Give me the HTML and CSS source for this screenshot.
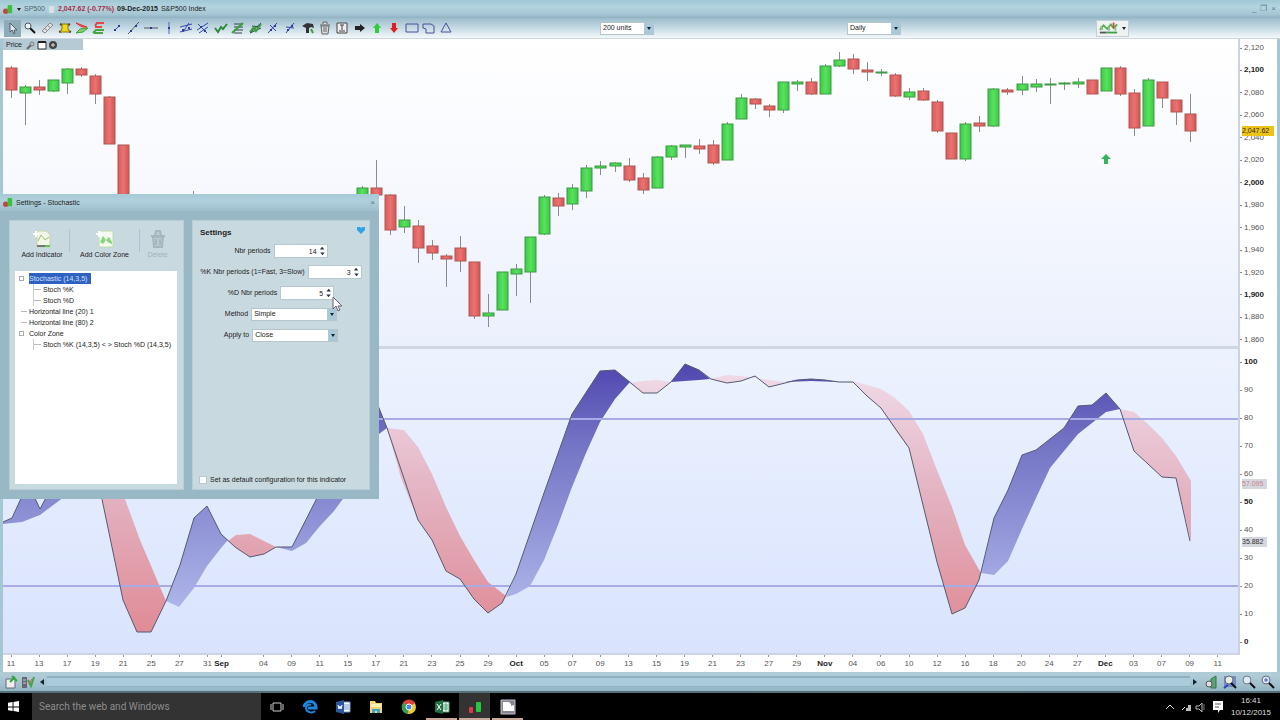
FILE: index.html
```html
<!DOCTYPE html>
<html lang="en">
<head>
  <meta charset="UTF-8" />
  <meta name="viewport" content="width=device-width, initial-scale=1.0" />
  <title>SP500 - Daily</title>
  <link rel="stylesheet" href="styles.css">
</head>
<body>
  <div class="app">
    <header class="titlebar">
      <svg class="logo" viewBox="0 0 12 12"><circle cx="3" cy="8" r="3" fill="#c8453c"/><rect x="5" y="1" width="5" height="9" rx="1" fill="#35c43c"/></svg>
      <span class="caret"></span>
      <span class="muted">SP500</span>
      <i class="flag"></i>
      <b class="quote">2,047.62 (-0.77%)</b>
      <b>09-Dec-2015</b>
      <span>S&amp;P500 Index</span>
      <div class="win-buttons">
        <button aria-label="Minimize">_</button>
        <button aria-label="Restore">❐</button>
        <button aria-label="Close">×</button>
      </div>
    </header>

    <div class="toolbar">
      <div class="tools">
        <button class="pressed" aria-label="Select"><svg viewBox="0 0 14 14"><path d="M4 2v9l2-2 2 4 1-1-1-3h3z" fill="#dfe8ec" stroke="#50616b"/></svg></button>
        <button aria-label="Zoom"><svg viewBox="0 0 14 14"><path d="M7 7l5 5" stroke="#111" stroke-width="2"/><circle cx="5" cy="5" r="3" fill="#e8f4fa" stroke="#555"/></svg></button>
        <button aria-label="Ruler"><svg viewBox="0 0 14 14"><path d="M2 10l8-8 3 2-8 8z" fill="#e4e4e0" stroke="#888"/><path d="M5 8l2 1M8 5l2 1" stroke="#888"/></svg></button>
        <button aria-label="Alert"><svg viewBox="0 0 14 14"><path d="M2 3l2 1M12 3l-2 1M1 11l3-1M13 11l-3-1" stroke="#444" stroke-width="2"/><path d="M4 3h6v5l2 3H2l2-3z" fill="#f0d820" stroke="#82730c"/></svg></button>
        <button aria-label="Buy order"><svg viewBox="0 0 14 14"><path d="M1 2l11 4H7z" fill="#e66" stroke="#d33"/><path d="M1 12l4-4 8-1-5 4z" fill="#8ccf72" stroke="#3b9e38"/></svg></button>
        <button aria-label="Sell order"><svg viewBox="0 0 14 14"><path d="M3 5l2-3h7M3 6h7" stroke="#e04848" fill="none" stroke-width="2"/><path d="M1 12l3-3h8M2 12h9" stroke="#4aa545" fill="none" stroke-width="2"/></svg></button>
        <button aria-label="Segment"><svg viewBox="0 0 14 14"><path d="M5 9l4-4" stroke="#3a49a8"/><path d="M4 8h2v2H4zM8 4h2v2H8z" fill="#2c3c9c"/></svg></button>
        <button aria-label="Line"><svg viewBox="0 0 14 14"><path d="M1 13L12 1" stroke="#555"/><path d="M3 9h2v2H3zM8 4h2v2H8z" fill="#2c3c9c"/></svg></button>
        <button aria-label="Horizontal line"><svg viewBox="0 0 14 14"><path d="M0 7h14" stroke="#555"/><path d="M6 6h2v2H6z" fill="#2c3c9c"/></svg></button>
        <button aria-label="Vertical line"><svg viewBox="0 0 14 14"><path d="M7 1v12" stroke="#4c62b5"/><path d="M6 6h2v2H6z" fill="#2c3c9c"/></svg></button>
        <button aria-label="Channel"><svg viewBox="0 0 14 14"><path d="M1 6l12-3M1 11l12-3M4 11l6-9" stroke="#3546b0" fill="none"/><path d="M3 8h2v2H3zM9 6h2v2H9z" fill="#2c3c9c"/></svg></button>
        <button aria-label="Pitchfork"><svg viewBox="0 0 14 14"><path d="M1 9l11-7M3 12l9-6M2 3l9 9" stroke="#3546b0" fill="none"/><path d="M4 5h2v2H4zM8 9h2v2H8z" fill="#2c3c9c"/></svg></button>
        <button aria-label="Trend"><svg viewBox="0 0 14 14"><path d="M1 7l3 4 3-5 2 2 4-5" stroke="#2e8a36" stroke-width="2" fill="none"/></svg></button>
        <button aria-label="Retracement"><svg viewBox="0 0 14 14"><path d="M3 3h9M3 6h9M3 9h9M3 12h8" stroke="#345"/><path d="M1 12L12 2" stroke="#3b9e38" stroke-width="2"/></svg></button>
        <button aria-label="Fan"><svg viewBox="0 0 14 14"><path d="M1 12L12 2M1 12l11-5M3 5l7 1" stroke="#345"/><path d="M1 11l4-5 2 4 5-7" stroke="#3b9e38" stroke-width="2" fill="none"/></svg></button>
        <button aria-label="Cycle"><svg viewBox="0 0 14 14"><path d="M2 12l9-10M4 4l6 6" stroke="#3546b0"/><path d="M4 8h2v2H4zM8 4h2v2H8z" fill="#2c3c9c"/></svg></button>
        <button aria-label="Cycle points"><svg viewBox="0 0 14 14"><path d="M3 12l8-10M3 6l8 1" stroke="#3546b0"/><path d="M4 8h2v2H4zM8 4h2v2H8z" fill="#2c3c9c"/></svg></button>
        <button aria-label="Edit"><svg viewBox="0 0 14 14"><path d="M1 5l5-3 6 1 1 4-3-1-2 1v5H5V7z" fill="#333"/><path d="M10 8l2 4" stroke="#3b9e38" stroke-width="2"/></svg></button>
        <button aria-label="Delete"><svg viewBox="0 0 14 14"><path d="M3 5h8l-1 8H4zM2 4h10M5 3V1h4v2M6 6v5M8 6v5" stroke="#666" fill="#ddd"/></svg></button>
        <button aria-label="Text"><svg viewBox="0 0 14 14"><path d="M2 2h10v10H2zM5 4h4M7 4v5M4 10h6" stroke="#444" fill="#eee"/></svg></button>
        <button aria-label="Arrow"><svg viewBox="0 0 14 14"><path d="M2 5h5V3l5 4-5 4V9H2z" fill="#222"/></svg></button>
        <button aria-label="Arrow up"><svg viewBox="0 0 14 14"><path d="M5 12V7H3l4-5 4 5H9v5z" fill="#30cc3c"/></svg></button>
        <button aria-label="Arrow down"><svg viewBox="0 0 14 14"><path d="M5 2v5H3l4 5 4-5H9V2z" fill="#e02020"/></svg></button>
        <button aria-label="Rectangle"><svg viewBox="0 0 14 14"><path d="M1 3h12v8H1z" stroke="#4c4f98" fill="none"/></svg></button>
        <button aria-label="Polygon"><svg viewBox="0 0 14 14"><path d="M1 3h8l3 2v7H4V8L1 7z" stroke="#4c4f98" fill="none"/></svg></button>
        <button aria-label="Triangle"><svg viewBox="0 0 14 14"><path d="M7 2l5 9H2z" stroke="#4c4f98" fill="none"/></svg></button>
      </div>
      <span class="drop"><select aria-label="Units"><option>200 units</option></select></span>
      <span class="drop"><select aria-label="Timeframe"><option>Daily</option></select></span>
      <button class="indicator-btn" aria-label="Indicators">
        <svg viewBox="0 0 22 14"><path d="M1 9l4-5 4 4 4-5 3 4 4-4" stroke="#55b04c" fill="none" stroke-width="2"/><path d="M2 5l2 4M11 5v5M18 6v4" stroke="#8cc47c" stroke-width="2"/><path d="M16 1v6" stroke="#e04848" stroke-width="2"/><path d="M1 12h7" stroke="#555" stroke-width="2"/><path d="M8 12h12" stroke="#3e9d48" stroke-width="2"/></svg>
        <span class="caret"></span>
      </button>
    </div>

    <main class="chart">
      <div class="pane price-pane">
        <svg id="price" viewBox="3 39 1235 307" preserveAspectRatio="none">
          <defs>
            <linearGradient id="up"><stop offset="0" stop-color="#3cc848"/><stop offset=".5" stop-color="#58e25c"/><stop offset="1" stop-color="#3cc848"/></linearGradient>
            <linearGradient id="down"><stop offset="0" stop-color="#d95c5c"/><stop offset=".5" stop-color="#ec7272"/><stop offset="1" stop-color="#cf5656"/></linearGradient>
          </defs>
          <g id="candles"></g>
          <path d="M1104 164v-5h-3l5-5 5 5h-3v5z" fill="#35b45c"/>
        </svg>
        <div class="pane-tab">
          Price
          <svg viewBox="0 0 36 10"><path d="M2 9l4-4" stroke="#666" stroke-width="2"/><circle cx="7" cy="4" r="2" fill="none" stroke="#777"/><path d="M13 2h8v7h-8z" fill="#fff" stroke="#333"/><path d="M13 2h8" stroke="#222" stroke-width="2"/><circle cx="28" cy="5" r="4" fill="#444"/><path d="M26 5h4M28 3v4" stroke="#ddd"/></svg>
        </div>
      </div>
      <ol class="axis price-axis" id="price-axis">
        <li class="tag last">2,047.62</li>
      </ol>

      <div class="splitter"></div>

      <div class="pane stoch-pane">
        <svg viewBox="3 349 1235 304" preserveAspectRatio="none">
          <defs>
            <linearGradient id="bull" gradientUnits="userSpaceOnUse" x1="0" y1="365" x2="0" y2="615"><stop offset="0" stop-color="#4f48b0"/><stop offset=".3" stop-color="#7272c4"/><stop offset="1" stop-color="#b0b8ea"/></linearGradient>
            <linearGradient id="bear" gradientUnits="userSpaceOnUse" x1="0" y1="375" x2="0" y2="630"><stop offset="0" stop-color="#efd9e6"/><stop offset=".5" stop-color="#e3b0bf"/><stop offset="1" stop-color="#e08c96"/></linearGradient>
          </defs>
          <g fill="url(#bull)">
            <path d="M3 522l9-4 11-24h10l7 15 8-15h20L56 503 40 515 22 522 3 524z"/>
            <path d="M166 601l14-36 14-47 13-12 14 28 7 6-7 8-14 18-13 22-15 19z"/>
            <path d="M276 547h16l28-55h28l-14 19-14 15-14 17-14 8z"/>
            <path d="M370 380l9 28 8 20-8 6-9 4z"/>
            <path d="M506 597l10-23 28-81 28-79 28-43 15-1 15 12-15 17-15 23-14 31-14 34-14 38-14 35-14 26-14 8z"/>
            <path d="M671 382l14-18 14 6 11 9-11 1z"/>
            <path d="M785 382l12-2 14-1 14 1 14 2-28-1z"/>
            <path d="M981 573l13-55 14-28 14-35 14-5 28-22 14-22 14-1 14-12 14 16-14 3-14 11-14 11-14 17-14 17-14 30-14 31-14 32-14 14z"/>
          </g>
          <g fill="url(#bear)">
            <path d="M98 480l25 120 14 32h14l15-31-26-61-22-60z"/>
            <path d="M228 541l8-6 14-1 12 6 14 7-12 7-14 3-15-10z"/>
            <path d="M387 428l17 2 14 17 14 27 14 33 14 29 14 24 14 22 18 14-4 7-14 10-14-14-14-20-14-8-14-31-14-20-17-42z"/>
            <path d="M630 383l13-2 14-1 14 2-14 11h-14z"/>
            <path d="M710 379l17-4 14 1 14 2 14 2 16 2-16 5-14-11-14 5-14 2z"/>
            <path d="M853 381l28 8 14 9 14 13 14 23 14 36 15 37 13 38 16 28-2 7-14 28-13 6-15-52-14-57-14-57-14-18-14-22-14-12z"/>
            <path d="M1120 409l14 3 14 12 14 14 14 18 15 25v60l-15-63-14-1-28-26z"/>
          </g>
          <path d="M3 419h1235M3 586h1235" class="level"/>
          <path class="k-line" d="M3 522l9-4 11-24h10l7 15 8-15 50-14 25 120 14 32h14l15-31 14-36 14-47 13-12 14 28 14 13 15 10 14-3 12-7h16l28-55 50-112 9 28 8 20 31 92 14 20 14 31 14 8 14 20 14 14 14-10 14-29 28-81 28-79 28-43 15-1 28 23h14l14-11 14-18 14 6 12 9 16 4 14-2 14-5 14 11 28-7 14-1 14 1 14 2h14l14 14 14 12 28 40 14 57 14 57 15 52 13-6 14-28 15-62 14-28 14-35 14-5 28-22 14-22 14-1 14-12 14 16 14 42 28 26 14 1 14 63"/>
        </svg>
      </div>
      <ol class="axis stoch-axis" id="stoch-axis">
        <li class="tag d-value">57.095</li>
        <li class="tag k-value">35.882</li>
      </ol>

      <ol class="dates" id="dates"></ol>
    </main>

    <footer class="scrollbar">
      <svg class="foot-left" viewBox="0 0 32 14"><path d="M1 4h9v9H1z" fill="#eee" stroke="#667"/><path d="M7 1l5 5M5 7l5-5" stroke="#30a83c" stroke-width="2"/><path d="M17 2h5v11h-5z" fill="#667"/><path d="M18 5h3M18 8h3" stroke="#ccc"/><path d="M23 5l3 6 3-9" stroke="#3fa548" stroke-width="2" fill="none"/><path d="M24 9l3-5" stroke="#d55"/></svg>
      <button class="scroll-arrow" aria-label="Scroll left"></button>
      <div class="track"></div>
      <button class="scroll-arrow right" aria-label="Scroll right"></button>
      <div class="foot-icons">
        <svg viewBox="0 0 14 14"><path d="M7 4l5-3v12H7z" fill="#5ba278" stroke="#37724e"/><circle cx="5" cy="9" r="3" fill="#ddd" stroke="#555"/></svg>
        <svg viewBox="0 0 14 14"><path d="M1 1h12v11H1z" fill="#6f8cd0"/><circle cx="6" cy="5" r="4" fill="#e6efdc" stroke="#667"/><path d="M8 8l5 5" stroke="#111" stroke-width="2"/><path d="M1 13l4-3" stroke="#3342a8" stroke-width="2"/></svg>
        <svg viewBox="0 0 14 14"><circle cx="5" cy="5" r="4" fill="#dceafa" stroke="#778"/><path d="M8 8l5 5" stroke="#111" stroke-width="2"/></svg>
        <svg viewBox="0 0 14 14"><circle cx="5" cy="5" r="4" fill="#dceafa" stroke="#668"/><path d="M3 5h4M5 3v4" stroke="#4458c0"/><path d="M8 8l5 5" stroke="#111" stroke-width="2"/></svg>
      </div>
    </footer>

    <!-- indicator settings window -->
    <section class="dialog">
      <header class="dialog-title">
        <svg class="logo" viewBox="0 0 12 12"><circle cx="3" cy="8" r="3" fill="#c8453c"/><rect x="5" y="1" width="5" height="9" rx="1" fill="#35c43c"/></svg>
        Settings - Stochastic
        <button aria-label="Close settings">×</button>
      </header>
      <div class="dialog-body">
        <div class="panel tree-panel">
          <div class="actions">
            <button>
              <svg viewBox="0 0 20 20"><path d="M5 2h10l3 4v12H5z" fill="#f2f7ea" stroke="#c4d3ae"/><path d="M6 12l3-6 4 5 4-3" stroke="#a0c070" fill="none"/><path d="M1 5h6M4 2v6" stroke="#fff" stroke-width="2"/><path d="M5 17h8" stroke="#777" stroke-width="2"/><path d="M13 17h5" stroke="#5cc85c" stroke-width="2"/></svg>
              Add Indicator
            </button>
            <button>
              <svg viewBox="0 0 20 20"><path d="M4 2h14v16H4z" fill="#f4faee" stroke="#c0d8b4"/><path d="M5 13l3-6 3 4 3-3 3 5v2l-3-1-3-3-3 4z" fill="#86d67c"/><path d="M1 5h6M4 2v6" stroke="#fff" stroke-width="2"/></svg>
              Add Color Zone
            </button>
            <button disabled>
              <svg viewBox="0 0 20 20"><path d="M5 8h10l-1 10H6zM3 7h14M7 6l1-4h4l1 4M8 10v6M12 10v6" stroke="#a8b6bd" stroke-width="2" fill="#bccad1"/></svg>
              Delete
            </button>
          </div>
          <ul class="tree">
            <li class="node"><i></i><span class="selected">Stochastic (14,3,5)</span></li>
            <li class="leaf deep">Stoch %K</li>
            <li class="leaf deep">Stoch %D</li>
            <li class="leaf">Horizontal line (20) 1</li>
            <li class="leaf">Horizontal line (80) 2</li>
            <li class="node"><i></i>Color Zone</li>
            <li class="leaf deep">Stoch %K (14,3,5) &lt; &gt; Stoch %D (14,3,5)</li>
          </ul>
        </div>
        <form class="panel form-panel">
          <div class="form-head">
            <h2>Settings</h2>
            <svg viewBox="0 0 10 8"><path d="M1 1h3l1 1 1-1h3v3L5 8 1 4z" fill="#2da4e4"/></svg>
          </div>
          <div class="row">
            <label for="n">Nbr periods</label>
            <span class="spin"><input id="n" type="number" value="14"></span>
          </div>
          <div class="row">
            <label for="k">%K Nbr periods (1=Fast, 3=Slow)</label>
            <span class="spin"><input id="k" type="number" value="3"></span>
          </div>
          <div class="row">
            <label for="d">%D Nbr periods</label>
            <span class="spin"><input id="d" type="number" value="5"></span>
          </div>
          <div class="row">
            <label for="method">Method</label>
            <span class="drop wide"><select id="method"><option>Simple</option></select></span>
          </div>
          <div class="row">
            <label for="apply">Apply to</label>
            <span class="drop wide"><select id="apply"><option>Close</option></select></span>
          </div>
          <label class="default"><input type="checkbox">Set as default configuration for this indicator</label>
        </form>
      </div>
      <svg class="pointer" viewBox="0 0 10 16"><path d="M1 1v12l3-3 2 5 2-1-2-4h4z" fill="#fff" stroke="#667"/></svg>
    </section>
  </div>

  <nav class="taskbar">
    <button class="start" aria-label="Start"><svg viewBox="0 0 12 12"><path d="M0 2l5-1v5H0zM6 1l6-1v6H6zM0 7h5v4l-5-1zM6 7h6v5l-6-1z" fill="#fff"/></svg></button>
    <input class="search" type="text" placeholder="Search the web and Windows" aria-label="Search">
    <div class="pinned">
      <button aria-label="Task view"><svg viewBox="0 0 16 16"><path d="M4 4h8v8H4zM2 5v6M14 5v6" stroke="#ccc" fill="none"/></svg></button>
      <button aria-label="Edge"><svg viewBox="0 0 16 16"><path d="M13 12c-3 3-9 1-9-3 0-3 3-4 5-3" fill="none" stroke="#1c86e0" stroke-width="2"/><path d="M2 8c1-7 12-8 12 1H6" fill="none" stroke="#1c86e0" stroke-width="3"/></svg></button>
      <button aria-label="Word"><svg viewBox="0 0 16 16"><path d="M8 3h7v10H8z" fill="#fff" stroke="#6d93d0"/><path d="M9 6h5M9 8h5M9 10h5" stroke="#6d93d0"/><path d="M1 3l8-2v14l-8-2z" fill="#2a569c"/><path d="M3 6l1 4 1-3 1 3 1-4" stroke="#fff" fill="none"/></svg></button>
      <button aria-label="Explorer"><svg viewBox="0 0 16 16"><path d="M2 2h5l1 2h6v10H2z" fill="#f2d774"/><path d="M3 5h10v3H3z" fill="#fbf0b8"/><path d="M4 14v-4h8v4h-3v-2H7v2z" fill="#3fa4cc"/></svg></button>
      <button aria-label="Chrome"><svg viewBox="0 0 16 16"><circle cx="8" cy="8" r="7" fill="#f0c830"/><path d="M8 8L2 4a7 7 0 0 1 12 0z" fill="#dc4437"/><path d="M8 8L2 4a7 7 0 0 0 5 11z" fill="#32a050"/><circle cx="8" cy="8" r="3" fill="#4a88e8" stroke="#fff"/></svg></button>
      <button class="open" aria-label="Excel"><svg viewBox="0 0 16 16"><path d="M8 3h7v10H8z" fill="#fff" stroke="#48a070"/><path d="M9 6h5M9 8h5M9 10h5M12 4v8" stroke="#48a070"/><path d="M1 3l8-2v14l-8-2z" fill="#1f7244"/><path d="M3 5l4 6M7 5l-4 6" stroke="#fff"/></svg></button>
      <button class="open active" aria-label="Charts"><svg viewBox="0 0 16 16"><rect x="2" y="8" width="4" height="6" rx="1" fill="#e03848"/><rect x="9" y="3" width="5" height="10" rx="1" fill="#25c83c"/></svg></button>
      <button class="open" aria-label="Recorder"><svg viewBox="0 0 16 16"><path d="M1 1h14v14H1z" fill="#888590" stroke="#c4c0cc"/><path d="M3 3h6l2 2v2l3-1v6H3z" fill="#fff"/></svg></button>
    </div>
    <div class="tray">
      <svg viewBox="0 0 64 16"><path d="M6 10l4-4 4 4" stroke="#ddd" fill="none"/><path d="M23 12h3V9h2V6h3v6z" fill="#bbb"/><path d="M22 11l3-3" stroke="#eee"/><path d="M36 7h3l3-3v9l-3-3h-3z" fill="none" stroke="#bbb"/><path d="M44 5v6" stroke="#777"/><path d="M53 2h10v9h-3l-2 3v-3h-5z" fill="#fff"/><path d="M55 5h6M55 8h4" stroke="#555"/></svg>
      <div class="clock"><span>16:41</span><span>10/12/2015</span></div>
    </div>
  </nav>

  <script>
    // bar number, direction, body top, body bottom, wick top, wick bottom
    const bars = [
      [0,'d',68,90,66,98],[1,'u',87,93,85,125],[2,'d',87,90,80,95],[3,'u',80,91,80,92],
      [4,'u',69,83,68,94],[5,'d',69,75,67,77],[6,'d',76,94,74,104],[7,'d',97,144,96,144],
      [8,'d',145,205,145,205],[13,'d',200,205,191,205],[25,'u',188,200,186,200],[26,'d',188,195,160,195],
      [27,'d',195,230,194,235],[28,'u',220,227,206,233],[29,'d',226,248,220,263],[30,'d',246,253,240,260],
      [31,'d',256,259,254,287],[32,'d',248,261,236,272],[33,'d',262,316,262,319],[34,'u',313,316,294,327],
      [35,'u',272,310,272,310],[36,'u',269,274,264,296],[37,'u',237,272,237,303],[38,'u',197,234,195,235],
      [39,'d',198,206,193,216],[40,'u',188,204,184,210],[41,'u',168,191,165,198],[42,'u',166,168,161,175],
      [43,'u',163,166,162,172],[44,'d',166,180,158,182],[45,'d',178,190,173,194],[46,'u',157,188,156,188],
      [47,'u',146,157,145,160],[48,'u',145,147,145,158],[49,'d',146,149,139,154],[50,'d',145,163,140,165],
      [51,'u',124,160,122,160],[52,'u',98,119,94,119],[53,'d',99,104,98,109],[54,'d',106,110,104,117],
      [55,'u',82,110,82,113],[56,'u',82,84,80,91],[57,'d',82,94,78,95],[58,'u',66,94,64,94],
      [59,'u',60,66,52,67],[60,'d',59,69,54,74],[61,'d',70,72,62,81],[62,'u',72,73,69,76],
      [63,'d',75,96,73,97],[64,'u',92,97,88,100],[65,'d',91,100,88,101],[66,'d',102,131,100,133],
      [67,'d',133,159,133,159],[68,'u',124,159,122,161],[69,'d',123,126,116,132],[70,'u',89,126,88,127],
      [71,'d',90,92,88,95],[72,'u',84,90,76,95],[73,'u',84,87,79,92],[74,'u',84,85,78,104],
      [75,'u',83,84,82,90],[76,'u',82,84,78,88],[77,'d',80,94,80,94],[78,'u',68,91,68,91],
      [79,'d',68,94,66,96],[80,'d',93,128,89,136],[81,'u',80,126,78,126],[82,'d',82,98,82,108],
      [83,'d',100,112,100,125],[84,'d',114,131,94,142]
    ];
    const step = 1207 / 86;
    document.getElementById('candles').innerHTML = bars.map(([i, dir, top, bottom, high, low]) => {
      const x = Math.round(11 + i * step);
      return `<path class="wick" d="M${x + 0.5} ${high}V${low}"/>` +
        `<rect class="${dir}" x="${x - 5}" y="${top}" width="11" height="${bottom - top}"/>`;
    }).join('');

    function axis(id, from, to, by, major) {
      let html = '';
      for (let v = from; v >= to; v -= by) {
        html += `<li class="${v % major === 0 ? 'major' : ''}">${v.toLocaleString('en-US')}</li>`;
      }
      document.getElementById(id).insertAdjacentHTML('afterbegin', html);
    }
    axis('price-axis', 2120, 1860, 20, 100);
    axis('stoch-axis', 100, 0, 10, 50);

    // one slot per bar, every second one is labelled
    const days = ('11 13 17 19 21 25 27 31 - 04 09 11 15 17 21 23 25 29 Oct 05 07 09 13 15 19 21 23 27 29 ' +
      'Nov 04 06 10 12 16 18 20 24 27 Dec 03 07 09 11').split(' ');
    const slots = Array(87).fill('');
    days.forEach((day, i) => { if (day !== '-') slots[i * 2] = day; });
    slots[15] = 'Sep';
    document.getElementById('dates').innerHTML = slots.map(text =>
      `<li class="${text ? 'tick' : ''} ${isNaN(text) ? 'major' : ''}">${text}</li>`).join('');
  </script>
</body>
</html>
```

FILE: styles.css
```css
* {
  box-sizing: border-box;
}
body {
  margin: 0;
  height: 100vh;
  display: flex;
  flex-direction: column;
  font-family: "Liberation Sans", Arial, sans-serif;
  font-size: 8px;
  line-height: 10px;
  color: #222;
  overflow: hidden;
}
button, input, select {
  font: inherit;
  color: inherit;
  margin: 0;
  padding: 0;
  border: 0;
  background: none;
}
ol, ul {
  list-style: none;
  margin: 0;
  padding: 0;
}
svg {
  display: block;
}

.app {
  position: relative;
  flex: 1;
  min-height: 0;
  display: flex;
  flex-direction: column;
  background: #a5c6d3;
}

/* title bar */
.titlebar {
  height: 18px;
  display: flex;
  align-items: center;
  gap: 3px;
  padding: 0 4px 0 3px;
  font-size: 7px;
  background: linear-gradient(#a0c8d5, #b4d4df 40%, #a4c5d2 80%, #8fb2c2);
}
.logo {
  width: 11px;
  height: 11px;
}
.muted {
  color: #4c646e;
}
.flag {
  width: 5px;
  height: 7px;
  margin: 0 1px;
  background: #d5e2e8;
}
.quote {
  color: #a82c44;
}
.caret {
  border: 2px solid transparent;
  border-top: 3px solid #222;
  border-bottom: 0;
}
.win-buttons {
  margin-left: auto;
  display: flex;
  gap: 4px;
  color: #5b7d8c;
  font-size: 8px;
}

/* toolbar */
.toolbar {
  height: 21px;
  display: grid;
  grid-template-columns: 600fr 247fr 249fr 184fr;
  align-items: center;
  justify-items: start;
  background: linear-gradient(#9bbccb, #c2d7e2 45%, #f3f8fb);
  border-bottom: 1px solid #ccd6dc;
}
.tools {
  display: grid;
  grid-template-columns: repeat(26, 1fr);
  width: 451px;
  margin-left: 4px;
}
.tools button {
  height: 17px;
  display: flex;
  align-items: center;
  justify-content: center;
}
.tools .pressed {
  background: #8fabb8;
}
.tools svg {
  width: 14px;
  height: 14px;
}
.drop {
  position: relative;
  display: block;
  width: 54px;
  height: 13px;
  background: #fff;
  border: 1px solid #b4c5ce;
}
.drop select {
  appearance: none;
  display: block;
  width: 100%;
  height: 11px;
  padding-left: 2px;
  font-size: 7px;
}
.drop::before {
  content: '';
  position: absolute;
  top: 0;
  right: 0;
  width: 9px;
  height: 11px;
  background: #a9c8d8;
  pointer-events: none;
}
.drop::after {
  content: '';
  position: absolute;
  top: 4px;
  right: 2px;
  border: 2px solid transparent;
  border-top: 3px solid #123;
  border-bottom: 0;
  pointer-events: none;
}
.indicator-btn {
  display: flex;
  align-items: center;
  gap: 3px;
  width: 33px;
  height: 17px;
  padding: 0 2px;
  background: #eef2f3;
  border: 1px solid #c3cfd5;
}
.indicator-btn svg {
  width: 21px;
  height: 14px;
}

/* chart */
.chart {
  flex: 1;
  min-height: 0;
  display: grid;
  grid-template-columns: 1fr 37px;
  grid-template-rows: 307fr 3px 306fr 17px;
  margin: 0 3px;
  background: #fff;
}
.pane {
  position: relative;
  min-height: 0;
  border-right: 2px solid #ccd3e0;
}
.pane > svg {
  width: 100%;
  height: 100%;
  position: absolute;
}
.price-pane {
  background: linear-gradient(#fff, #f7f9fe 45%, #ebf0fd);
}
.stoch-pane {
  background: linear-gradient(#edf3fe, #e2ebfe 50%, #d9e3fd);
  border-bottom: 2px solid #ccd5e6;
}
.pane-tab {
  position: absolute;
  top: 0;
  left: 0;
  width: 80px;
  height: 11px;
  display: flex;
  align-items: center;
  gap: 3px;
  padding-left: 3px;
  font-size: 7px;
  background: #b5cad4;
}
.pane-tab svg {
  width: 36px;
  height: 10px;
}
.splitter {
  grid-column: 1 / -1;
  margin-right: 37px;
  background: #cfd7e4;
}
.wick {
  stroke: #8b8b8b;
  fill: none;
}
.u {
  fill: url(#up);
  stroke: #3c9a44;
}
.d {
  fill: url(#down);
  stroke: #b0564f;
}
.level {
  stroke: #a9ace4;
  stroke-width: 2;
  fill: none;
}
.k-line {
  stroke: #555a72;
  fill: none;
}
.axis {
  position: relative;
  display: flex;
  flex-direction: column;
  justify-content: space-between;
  color: #555;
  line-height: 8px;
}
.axis li {
  display: flex;
  align-items: center;
  gap: 2px;
}
.axis li::before {
  content: '';
  width: 2px;
  height: 1px;
  background: #888;
}
.major {
  font-weight: bold;
  color: #222;
}
.price-axis {
  padding: 5px 0 2px;
}
.stoch-axis {
  padding: 9px 0;
}
.axis .tag {
  position: absolute;
  left: 2px;
  width: 32px;
  height: 10px;
  margin-top: -5px;
  font-size: 7px;
}
.axis .tag::before {
  display: none;
}
.axis .tag.last {
  top: 30%;
  background: #ecc418;
  color: #332a00;
}
.axis .tag.d-value,
.axis .tag.k-value {
  width: 25px;
  background: #d3d7de;
}
.axis .tag.d-value {
  top: 44%;
  color: #d0808c;
}
.axis .tag.k-value {
  top: 63%;
  color: #333;
}
.dates {
  display: flex;
  justify-content: space-between;
  padding: 0 22px 0 8px;
  color: #555;
}
.dates li {
  position: relative;
  width: 0;
  display: flex;
  justify-content: center;
  padding-top: 4px;
}
.dates .tick::before {
  content: '';
  position: absolute;
  top: 0;
  width: 1px;
  height: 2px;
  background: #999;
}

/* bottom scroll bar */
.scrollbar {
  height: 21px;
  display: flex;
  align-items: center;
  gap: 3px;
  padding: 0 5px;
  background: linear-gradient(#aecbd6 20%, #a0c0cd 70%, #93b4c2);
  border-bottom: 2px solid #55707c;
}
.foot-left {
  width: 32px;
  height: 14px;
}
.track {
  flex: 1;
  height: 11px;
  background: #a9cbda;
  border-top: 2px solid #8fb0bf;
  border-bottom: 1px solid #8fb0bf;
}
.scroll-arrow {
  border: 3px solid transparent;
  border-right: 4px solid #123;
  border-left: 0;
}
.scroll-arrow.right {
  border-left: 4px solid #123;
  border-right: 0;
}
.foot-icons {
  display: flex;
  gap: 5px;
  margin-left: 4px;
}
.foot-icons svg {
  width: 14px;
  height: 14px;
}

/* settings window */
.dialog {
  position: absolute;
  top: 194px;
  left: 0;
  width: 379px;
  height: 305px;
  display: flex;
  flex-direction: column;
  font-size: 7px;
  background: #98b8c5;
}
.dialog-title {
  height: 17px;
  display: flex;
  align-items: center;
  gap: 2px;
  padding: 0 4px 0 3px;
  background: linear-gradient(#a6cad7, #b0d0dc 40%, #9dbfcd);
}
.dialog-title button {
  margin-left: auto;
  font-size: 8px;
  color: #567886;
}
.dialog-body {
  flex: 1;
  display: flex;
  gap: 8px;
  padding: 9px;
}
.panel {
  background: #c9d9e0;
  border: 1px solid #b9cdd6;
}
.tree-panel {
  width: 175px;
  display: flex;
  flex-direction: column;
  padding: 8px 6px 5px 5px;
}
.actions {
  display: grid;
  grid-template-columns: 54px 70px 36px;
  height: 42px;
}
.actions button {
  display: flex;
  flex-direction: column;
  align-items: center;
  gap: 1px;
  height: 32px;
  white-space: nowrap;
}
.actions button + button {
  border-left: 1px solid #b3c3ca;
  border-image: linear-gradient(#b3c3ca 70%, transparent 70%) 1;
}
.actions button:disabled {
  color: #a3b3ba;
}
.actions svg {
  width: 20px;
  height: 20px;
}
.tree {
  flex: 1;
  padding: 2px 0 0 4px;
  background: #fff;
  overflow: hidden;
  white-space: nowrap;
  line-height: 11px;
}
.tree li {
  display: flex;
  align-items: center;
  height: 11px;
}
.node i {
  width: 5px;
  height: 5px;
  margin-right: 5px;
  border: 1px solid #aaa;
}
.leaf::before {
  content: '';
  width: 6px;
  height: 1px;
  margin: 0 2px;
  background: #bbb;
}
.leaf.deep::before {
  width: 7px;
  height: 11px;
  margin-left: 14px;
  background: linear-gradient(#bbb, #bbb) 0 5px / 7px 1px no-repeat;
  border-left: 1px solid #ccc;
}
.selected {
  padding-right: 4px;
  background: #2f62c0;
  color: #cfe0ff;
}
.form-panel {
  flex: 1;
  display: flex;
  flex-direction: column;
  gap: 5px;
  padding: 5px 3px 4px;
}
.form-head {
  display: flex;
  justify-content: space-between;
  padding-left: 4px;
}
.form-head h2 {
  margin: 2px 0 0;
  font-size: 8px;
}
.form-head svg {
  width: 10px;
  height: 8px;
}
.row {
  display: flex;
  justify-content: center;
  align-items: center;
  gap: 3px;
  height: 16px;
}
.spin {
  position: relative;
  width: 54px;
  height: 14px;
  background: #fff;
  border: 1px solid #b7c8d0;
}
.spin input {
  display: block;
  width: 100%;
  height: 12px;
  padding-right: 10px;
  text-align: right;
  appearance: textfield;
}
.spin input::-webkit-inner-spin-button {
  display: none;
}
.spin::before,
.spin::after {
  content: '';
  position: absolute;
  right: 0;
  width: 9px;
  height: 6px;
  background: #234;
  clip-path: polygon(50% 30%, 75% 75%, 25% 75%);
  pointer-events: none;
}
.spin::after {
  bottom: 0;
  transform: rotate(180deg);
}
.drop.wide {
  width: 86px;
}
.default {
  display: flex;
  align-items: center;
  gap: 3px;
  margin-top: auto;
  padding-left: 3px;
}
.default input {
  appearance: none;
  width: 8px;
  height: 8px;
  background: #fff;
  border: 1px solid #b9c6cc;
}
.pointer {
  position: absolute;
  top: 102px;
  left: 332px;
  width: 10px;
  height: 16px;
}

/* windows taskbar */
.taskbar {
  height: 27px;
  display: flex;
  background: #000;
  color: #ddd;
}
.start {
  width: 26px;
  margin-right: 6px;
  display: flex;
  align-items: center;
  justify-content: center;
}
.start svg {
  width: 11px;
  height: 11px;
}
.search {
  width: 229px;
  padding-left: 7px;
  background: #333;
  font-family: Roboto, sans-serif;
  font-size: 10px;
}
.search::placeholder {
  color: #8c8c8c;
  opacity: 1;
}
.pinned {
  display: flex;
}
.pinned button {
  width: 31px;
  margin-right: 2px;
  display: flex;
  align-items: center;
  justify-content: center;
}
.pinned svg {
  width: 16px;
  height: 16px;
}
.pinned .open {
  box-shadow: inset 0 -2px #c9a898;
}
.pinned .active {
  background: #333;
}
.tray {
  margin-left: auto;
  display: flex;
  align-items: center;
  gap: 7px;
  padding-right: 9px;
}
.tray svg {
  width: 64px;
  height: 16px;
}
.clock {
  display: flex;
  flex-direction: column;
  align-items: center;
  font-size: 8px;
  line-height: 12px;
}
```
